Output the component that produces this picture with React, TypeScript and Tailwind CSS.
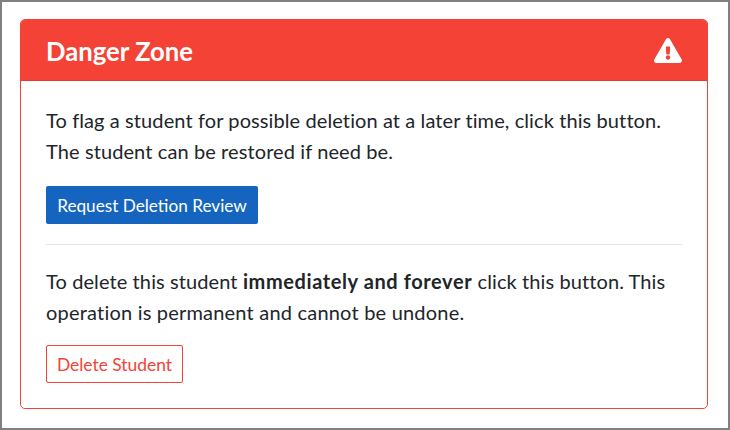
export default function App() {
  return (
    <div className="w-[730px] h-[430px] border-2 border-[#808080] bg-white pt-[17px] px-[18px] font-['Lato','Open_Sans',sans-serif] text-[#212529]">
      <div className="w-[688px] h-[390px] border border-[#f44336] rounded-[5px] overflow-hidden">
        <div className="h-[61px] bg-[#f44336] border-b border-[#e53935] flex items-center justify-between pl-[25px] pr-[25px]">
          <h2 className="pt-[3px] text-[25.7px] font-bold text-white leading-none">Danger Zone</h2>
          <svg className="mt-[1px]" width="28" height="25" viewBox="0 0 576 512" fill="#ffffff" aria-hidden="true">
            <path d="M569.5 440C588 472 564.8 512 527.9 512H48.1c-36.9 0-60-40.100-41.600-72L246.400 24c18.500-32 64.700-32 83.200 0l239.900 416zM288 354c-25.400 0-46 20.600-46 46s20.600 46 46 46 46-20.600 46-46-20.600-46-46-46zm-43.700-165.300l7.400 136c.3 6.400 5.600 11.300 12 11.300h48.500c6.400 0 11.600-5 12-11.300l7.400-136c.4-6.900-5.100-12.700-12-12.700h-63.400c-6.900 0-12.400 5.800-12 12.700z" />
          </svg>
        </div>
        <div className="pt-[24px] px-[25px]">
          <p className="text-[20px] leading-[31px] tracking-[0.1px]">
            To flag a student for possible deletion at a later time, click this button.<br />The student can be restored if need be.
          </p>
          <button className="mt-[19px] h-[38px] w-[212px] pt-[2px] rounded-[2px] bg-[#1565c0] text-white text-[17.2px] flex items-center justify-center">
            Request Deletion Review
          </button>
          <hr className="mt-[20px] border-t border-[#e5e5e5]" />
          <p className="mt-[21px] text-[20px] leading-[31px] tracking-[0.1px]">
            To delete this student <strong className="font-bold tracking-[0.6px]">immediately and forever</strong> click this button. This<br /><span className="tracking-[0.2px]">operation is permanent and cannot be undone.</span>
          </p>
          <button className="mt-[17px] h-[38px] w-[137px] pt-[3px] rounded-[2px] border border-[#f44336] text-[#f44336] text-[17.4px] flex items-center justify-center">
            Delete Student
          </button>
        </div>
      </div>
    </div>
  );
}
